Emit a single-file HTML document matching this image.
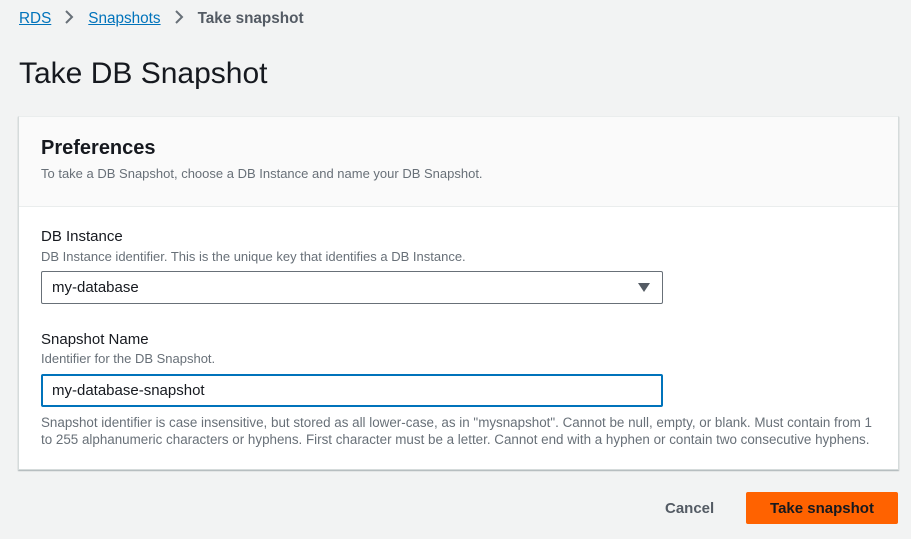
<!DOCTYPE html>
<html><head><style>
body{margin:0;background:#f2f3f3;font-family:"Liberation Sans",sans-serif;color:#16191f;width:911px;height:539px;overflow:hidden;position:relative}
.a{position:absolute;white-space:nowrap}
.crumb{top:10px;left:19px;font-size:15.3px;color:#545b64;font-weight:bold}
.crumb a{color:#0073bb;text-decoration:underline;font-weight:normal}
.sep{display:inline-block;margin:0 14px 0 13px;vertical-align:-1px}
h1{position:absolute;top:57px;left:19px;margin:0;font-size:30px;font-weight:normal}
.panel{position:absolute;left:18px;top:116px;width:879px;height:352px;background:#fff;border:1px solid #d5dbdb;border-top-color:#eaeded;box-shadow:0 1px 1px rgba(0,28,36,.3)}
.hd{position:absolute;left:0;top:0;width:879px;height:89px;background:#fafafa;border-bottom:1px solid #eaeded}
.lbl{font-size:15px}
.desc{font-size:13px;color:#687078}
.box{position:absolute;left:22px;width:622px;height:33px;border:1px solid #aab7b8;border-radius:2px;box-sizing:border-box;font-size:15px;padding:7px 0 0 10px}
</style></head><body>
<div class="a crumb"><a>RDS</a><span class="sep"><svg width="10" height="14"><path d="M2 1L8 7L2 13" fill="none" stroke="#687078" stroke-width="2"/></svg></span><a>Snapshots</a><span class="sep"><svg width="10" height="14"><path d="M2 1L8 7L2 13" fill="none" stroke="#687078" stroke-width="2"/></svg></span>Take snapshot</div>
<h1>Take DB Snapshot</h1>
<div class="panel">
 <div class="hd"></div>
 <div class="a" style="left:22px;top:20px;font-size:20px;font-weight:bold">Preferences</div>
 <div class="a desc" style="left:22px;top:49px">To take a DB Snapshot, choose a DB Instance and name your DB Snapshot.</div>
 <div class="a lbl" style="left:22px;top:111px">DB Instance</div>
 <div class="a desc" style="left:22px;top:132px">DB Instance identifier. This is the unique key that identifies a DB Instance.</div>
 <div class="box" style="top:154px;border-color:#687078">my-database
  <svg style="position:absolute;right:12px;top:11px" width="12" height="9"><path d="M0 0H12L6 9Z" fill="#545b64"/></svg></div>
 <div class="a lbl" style="left:22px;top:214px">Snapshot Name</div>
 <div class="a desc" style="left:22px;top:234px">Identifier for the DB Snapshot.</div>
 <div class="box" style="top:257px;border:2px solid #0073bb;padding:6px 0 0 9px">my-database-snapshot</div>
 <div class="a desc" style="left:22px;top:297px;line-height:17px;font-size:13.4px">Snapshot identifier is case insensitive, but stored as all lower-case, as in "mysnapshot". Cannot be null, empty, or blank. Must contain from 1<br>to 255 alphanumeric characters or hyphens. First character must be a letter. Cannot end with a hyphen or contain two consecutive hyphens.</div>
</div>
<div class="a" style="left:665px;top:500px;font-size:15px;font-weight:bold;color:#545b64">Cancel</div>
<div class="a" style="left:746px;top:492px;width:152px;height:32px;background:#ff6200;border-radius:2px;font-size:15px;font-weight:bold;text-align:center;line-height:33px;color:#16191f">Take snapshot</div>
</body></html>
